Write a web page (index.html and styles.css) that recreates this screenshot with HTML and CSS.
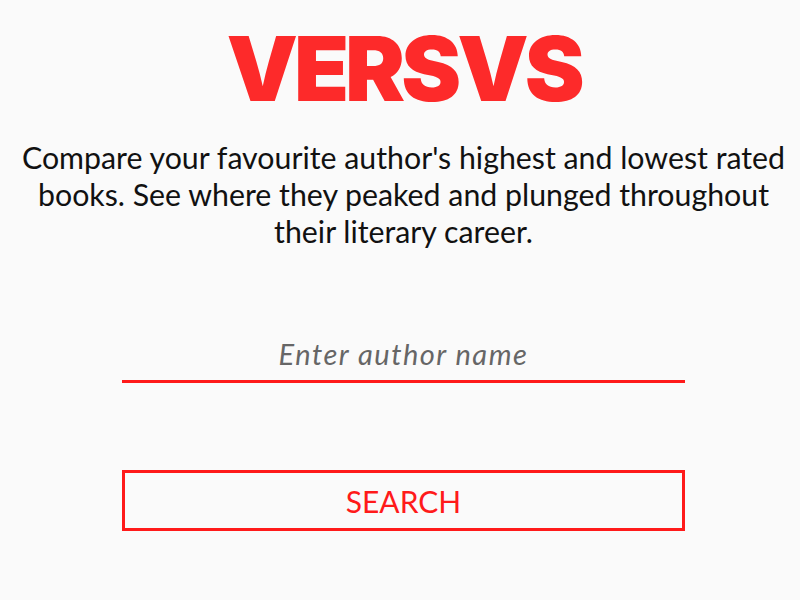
FILE: index.html
```html
<!DOCTYPE html>
<html lang="en">
<head>
<meta charset="utf-8">
<title>VERSVS</title>
<link rel="stylesheet" href="styles.css">
</head>
<body>
<main class="page">
  <h1 class="logo">VERSVS</h1>
  <p class="intro">Compare your favourite author's highest and lowest rated books. See where they peaked and plunged throughout their literary career.</p>
  <form class="search">
    <input class="author-input" type="text" placeholder="Enter author name">
    <button class="search-btn" type="button">SEARCH</button>
  </form>
</main>
</body>
</html>
```

FILE: styles.css
```css
html, body {
  margin: 0;
  padding: 0;
  background: #fafafa;
}
.page {
  display: flex;
  flex-direction: column;
  align-items: center;
  padding-left: 7px;
  font-family: Lato, "Open Sans", sans-serif;
}
.logo {
  margin: 19px 0 0 0;
  font-family: Inter, "Open Sans", sans-serif;
  font-weight: 900;
  font-size: 90px;
  line-height: 100px;
  letter-spacing: -4px;
  color: #fd2a2a;
}
.intro {
  margin: 20px 0 0 0;
  width: 776px;
  text-align: center;
  font-size: 30.3px;
  line-height: 37px;
  color: #111;
}
.search {
  display: flex;
  flex-direction: column;
  width: 563px;
  margin-top: 83px;
}
.author-input {
  box-sizing: border-box;
  width: 100%;
  height: 50px;
  border: 0;
  border-bottom: 3px solid #ff1a1a;
  background: transparent;
  font-family: Lato, sans-serif;
  font-style: italic;
  font-size: 29px;
  letter-spacing: 1.5px;
  text-align: center;
  outline: none;
  padding: 0 0 7px 0;
}
.author-input::placeholder {
  color: #666;
}
.search-btn {
  box-sizing: border-box;
  margin-top: 87px;
  height: 61px;
  border: 3px solid #ff1a1a;
  background: transparent;
  color: #ff1a1a;
  font-family: Lato, sans-serif;
  font-size: 30px;
  padding: 0;
}
```
